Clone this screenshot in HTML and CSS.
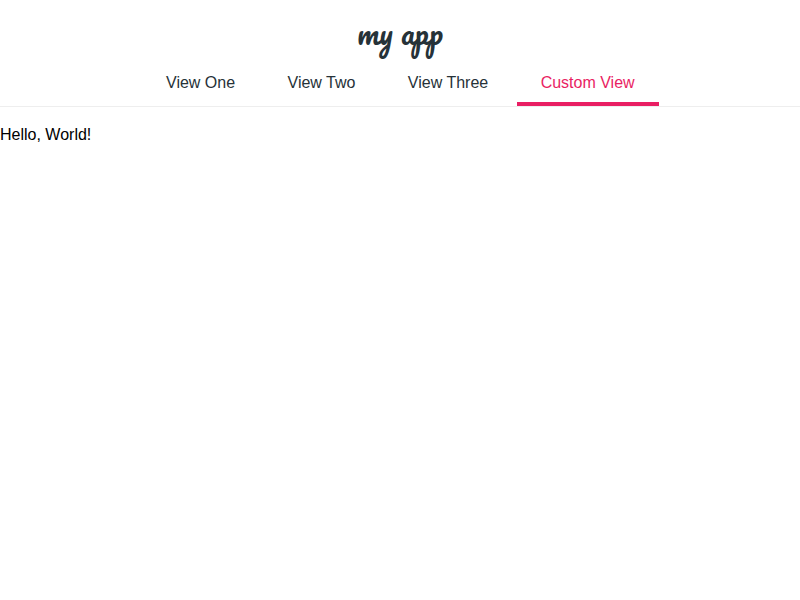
FILE: index.html
```html
<!DOCTYPE html>
<html lang="en">
<head>
<meta charset="utf-8">
<title>my app</title>
<link rel="stylesheet" href="styles.css">
</head>
<body>
<header class="header">
  <h1 class="logo">my app</h1>
  <nav class="tabs">
    <a class="tab">View One</a>
    <a class="tab">View Two</a>
    <a class="tab">View Three</a>
    <a class="tab tab-active">Custom View</a>
  </nav>
</header>
<main class="content"><p class="message">Hello, World!</p></main>
</body>
</html>
```
FILE: styles.css
```css
body {
  margin: 0;
  background: #fff;
  color: #000;
  font: 16px/18px "Liberation Sans", Arial, sans-serif;
}
.header {
  box-sizing: border-box;
  height: 107px;
  padding-top: 12px;
  border-bottom: 1px solid #eee;
}
.logo {
  margin: 0;
  height: 48px;
  color: #263238;
  font: 400 30px/42px Pacifico, "Liberation Serif", cursive;
  text-align: center;
}
.tabs {
  display: flex;
  justify-content: center;
  gap: 4.45px;
  padding-left: 0.6px;
}
.tab {
  box-sizing: border-box;
  height: 46px;
  padding: 14px 24px 0;
  border-bottom: 4px solid transparent;
  color: #263238;
}
.tab-active {
  color: #e91e63;
  border-color: #e91e63;
}
.message {
  margin: 19px 0 0;
}
```
